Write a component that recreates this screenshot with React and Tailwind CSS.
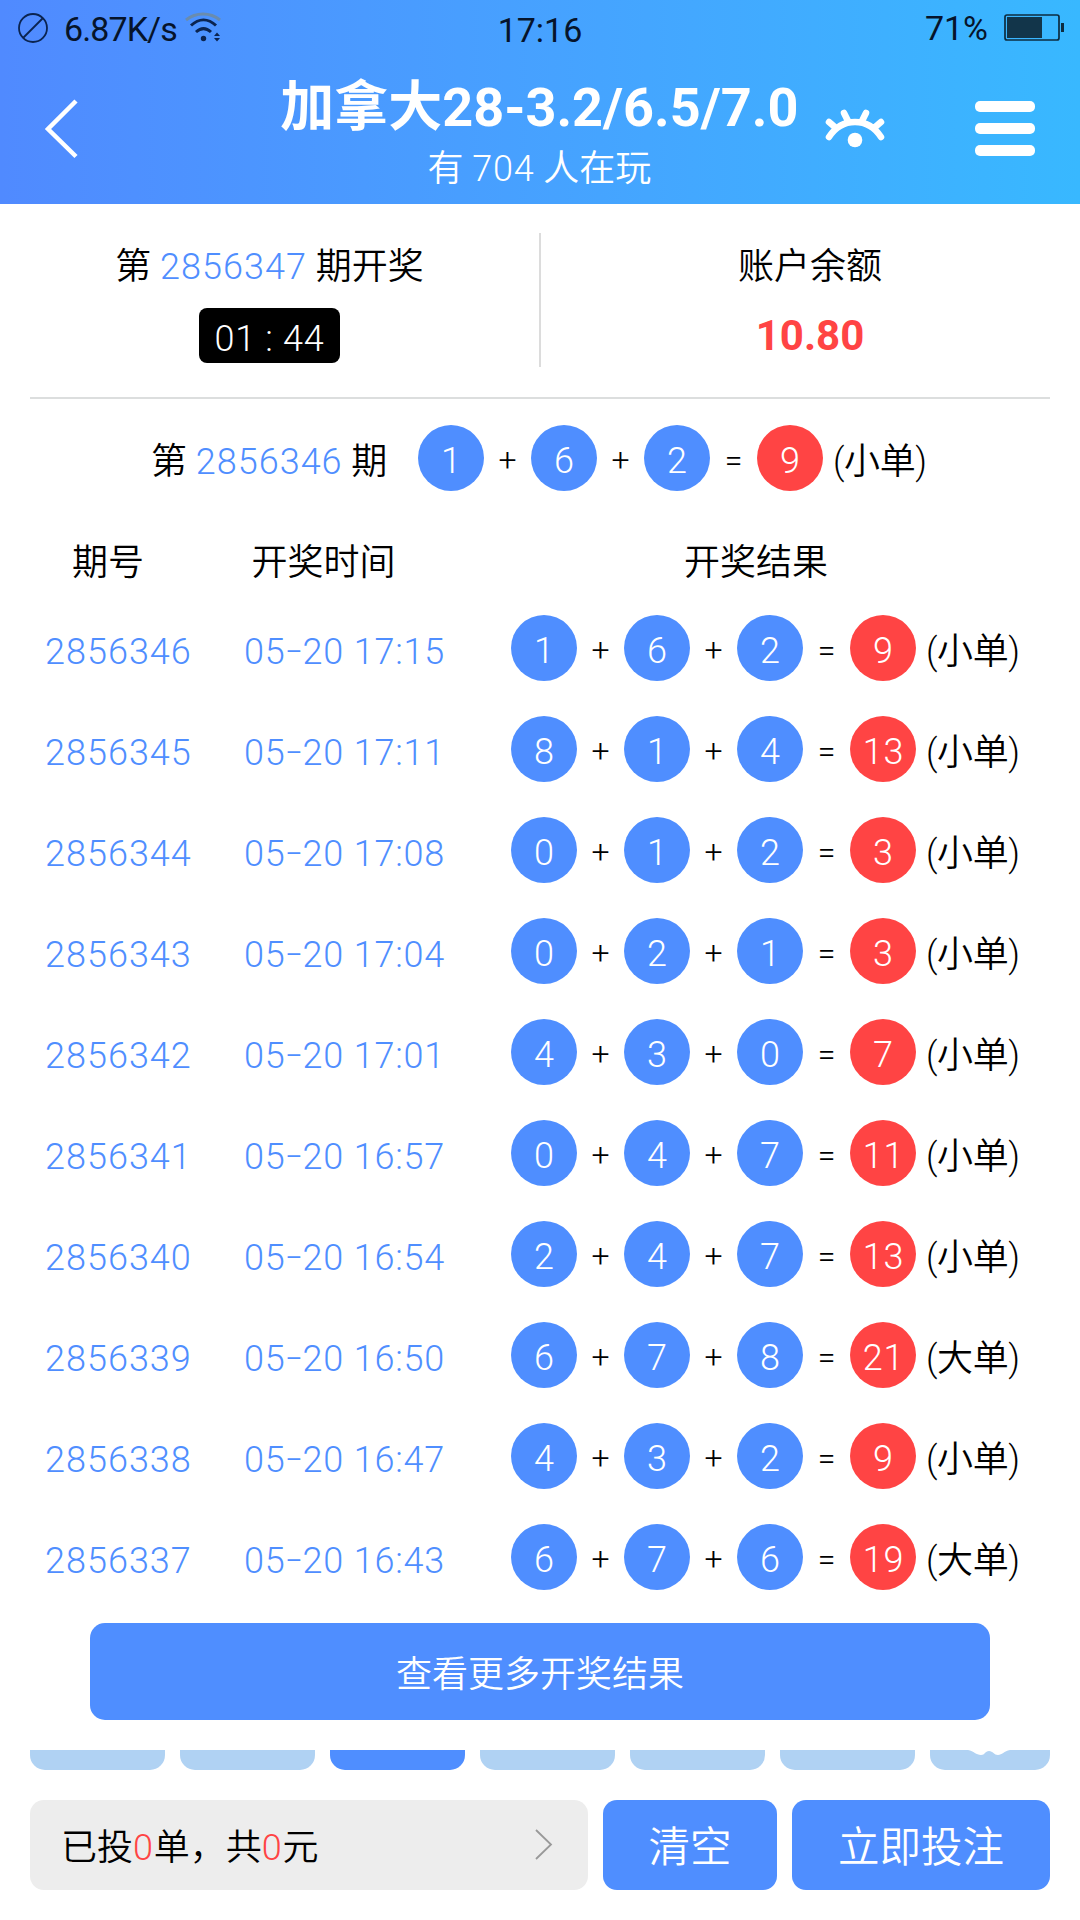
import React from "react";

const DRAWS = [
  { id: "2856346", time: "05-20 17:15", nums: [1, 6, 2], sum: 9, type: "小单" },
  { id: "2856345", time: "05-20 17:11", nums: [8, 1, 4], sum: 13, type: "小单" },
  { id: "2856344", time: "05-20 17:08", nums: [0, 1, 2], sum: 3, type: "小单" },
  { id: "2856343", time: "05-20 17:04", nums: [0, 2, 1], sum: 3, type: "小单" },
  { id: "2856342", time: "05-20 17:01", nums: [4, 3, 0], sum: 7, type: "小单" },
  { id: "2856341", time: "05-20 16:57", nums: [0, 4, 7], sum: 11, type: "小单" },
  { id: "2856340", time: "05-20 16:54", nums: [2, 4, 7], sum: 13, type: "小单" },
  { id: "2856339", time: "05-20 16:50", nums: [6, 7, 8], sum: 21, type: "大单" },
  { id: "2856338", time: "05-20 16:47", nums: [4, 3, 2], sum: 9, type: "小单" },
  { id: "2856337", time: "05-20 16:43", nums: [6, 7, 6], sum: 19, type: "大单" },
];

const TABS = [0, 1, 2, 3, 4, 5];

function StatusBar() {
  return (
    <div className="grid grid-cols-3 items-center h-[56px] text-[34px] leading-none font-normal text-[#06142b]">
      <div className="flex items-center pl-[17px]">
        <svg width="32" height="32" viewBox="0 0 32 32" fill="none" stroke="#0b2450" strokeWidth="1.8">
          <circle cx="16" cy="16" r="14" />
          <path d="M6 26L26 6" />
        </svg>
        <span className="ml-[15px] pt-[2px] w-[113px] tracking-[-0.9px]">6.87K/s</span>
        <svg className="ml-[8px] shrink-0" width="38" height="32" viewBox="0 0 38 32" fill="none" strokeWidth="3">
          <path d="M1 8C11 0 25 0 35 8" stroke="#6a8cae" />
          <path d="M6 13.500C14 6 23 6 31 13.500" stroke="#0b2450" />
          <path d="M11 20C16 15.500 21 15.500 26 20" stroke="#0b2450" />
          <circle cx="18.500" cy="26.500" r="2.700" fill="#0b2450" />
          <path d="M29 24l3-3.500 3 3.500zM29 26l3 3.500 3-3.500z" fill="#0b2450" />
        </svg>
      </div>
      <span className="text-center pt-[3px]">17:16</span>
      <div className="flex items-center justify-end pr-[16px]">
        <span>71%</span>
        <svg className="ml-[16px]" width="60" height="28" viewBox="0 0 60 28">
          <rect x="1" y="1" width="54" height="25" rx="2" fill="none" stroke="#0d2c40" strokeWidth="1.700" />
          <rect x="3" y="3" width="35" height="21" fill="#12354a" />
          <rect x="57" y="9" width="3" height="9" fill="#0d2c40" />
        </svg>
      </div>
    </div>
  );
}

function Header() {
  return (
    <header className="h-[204px] bg-linear-to-r from-[#508aff] to-[#38b8ff]">
      <StatusBar />
      <div className="flex justify-between h-[148px] text-white">
        <svg className="ml-[44px] mt-[43px]" width="36" height="60" viewBox="0 0 36 60" fill="none" stroke="white" strokeWidth="4.500">
          <path d="M32 2L4 30L32 57.500" />
        </svg>
        <div className="flex flex-col items-center ml-[199px] mt-[16px] w-[520px]">
          <h1 className="text-[54px] leading-[72px] font-bold whitespace-nowrap">加拿大28-3.2/6.5/7.0</h1>
          <p className="mt-[1px] text-[36px] leading-[48px] whitespace-nowrap">
            有 <span className="tracking-[0.8px]">704</span> 人在玩
          </p>
        </div>
        <svg className="ml-[22px] mr-[1px] mt-[48px]" width="64" height="46" viewBox="0 0 64 46" fill="none" stroke="white" strokeWidth="6.500" strokeLinecap="round">
          <path d="M7 33C20 13 46 13 59 33M14 24L7 18M26 17L22 9M40 17L44 9M52 24L59 18" />
          <circle cx="33" cy="36" r="7.300" fill="white" stroke="none" />
        </svg>
        <div className="flex flex-col gap-[11px] mt-[45px] mr-[45px] ml-[88px]">
          <i className="block w-[60px] h-[11px] rounded-[5px] bg-white" />
          <i className="block w-[60px] h-[11px] rounded-[5px] bg-white" />
          <i className="block w-[60px] h-[11px] rounded-[5px] bg-white" />
        </div>
      </div>
    </header>
  );
}

function Ball({ value, red }) {
  return (
    <span
      className={`flex items-center justify-center w-[66px] h-[66px] pt-[5px] pl-[1px] rounded-full text-white tracking-[0.8px] ${
        red ? "bg-[#ff4444]" : "bg-[#4f8eff]"
      }`}
    >
      {value}
    </span>
  );
}

function Sign({ children }) {
  return <span className="w-[47px] pt-[3px] text-center text-[32px]">{children}</span>;
}

function Result({ draw }) {
  return (
    <div className="flex items-center h-[66px] leading-none">
      <Ball value={draw.nums[0]} />
      <Sign>+</Sign>
      <Ball value={draw.nums[1]} />
      <Sign>+</Sign>
      <Ball value={draw.nums[2]} />
      <Sign>=</Sign>
      <Ball value={draw.sum} red />
      <span className="ml-[10px] pt-[8px] tracking-[-0.4px] whitespace-nowrap">({draw.type})</span>
    </div>
  );
}

function DrawTime({ time }) {
  const [month, rest] = time.split("-");
  return (
    <span className="flex w-[267px] pt-[7px] tracking-[0.8px] whitespace-pre">
      {month}
      <span className="w-[17px] text-center scale-x-150 -translate-y-px">-</span>
      {rest}
    </span>
  );
}

function App() {
  return (
    <div className="w-[1080px] h-[1920px] overflow-hidden bg-white text-black text-[36px] font-[350] font-[Roboto,'Noto_Sans_CJK_SC',sans-serif]">
      <Header />

      {/* Countdown and balance */}
      <section className="flex mx-[30px] h-[195px] pt-[29px] border-b-2 border-[#dcdede]">
        <div className="shrink-0 flex flex-col items-center w-[511px] h-[134px] pl-[30px] pr-[60px] border-r-2 border-[#dcdcdc]">
          <p className="mt-[10px] leading-[48px] whitespace-nowrap">
            第 <span className="text-[#4f8eff] tracking-[1px]">2856347</span> 期开奖
          </p>
          <div className="flex justify-center items-center mt-[17px] w-[141px] h-[55px] pt-[6px] rounded-[8px] bg-black text-white leading-none tracking-[0.8px]">
            <span>01</span>
            <span className="w-[27px] text-center">:</span>
            <span>44</span>
          </div>
        </div>
        <div className="flex flex-col items-center grow pl-[29px]">
          <p className="mt-[10px] leading-[48px]">账户余额</p>
          <p className="mt-[21px] text-[42px] leading-[48px] font-bold text-[#ff4444]">10.80</p>
        </div>
      </section>

      {/* Latest draw */}
      <section className="flex mt-[26px] pl-[151px] h-[66px] items-center">
        <p className="w-[267px] pt-[8px] leading-none whitespace-nowrap">
          第 <span className="text-[#4f8eff] tracking-[1px]">2856346</span> 期
        </p>
        <Result draw={DRAWS[0]} />
      </section>

      {/* History */}
      <section className="mt-[48px]">
        <div className="flex h-[48px] leading-[48px] text-center">
          <span className="w-[216px]">期号</span>
          <span className="w-[215px]">开奖时间</span>
          <span className="ml-[25px] w-[600px]">开奖结果</span>
        </div>
        <div className="flex flex-col gap-[35px] mt-[28px]">
          {DRAWS.map((draw) => (
            <div key={draw.id} className="flex items-center h-[66px] pl-[45px] leading-none">
              <span className="w-[199px] pt-[7px] text-[#4f8eff] tracking-[1px]">{draw.id}</span>
              <span className="text-[#4f8eff]">
                <DrawTime time={draw.time} />
              </span>
              <Result draw={draw} />
            </div>
          ))}
        </div>
      </section>

      <button className="block mx-auto mt-[33px] w-[900px] h-[97px] pt-[7px] rounded-[15px] bg-[#4f8eff] text-white">
        查看更多开奖结果
      </button>

      {/* Tab strip, cut off by the panel above */}
      <div className="flex gap-[15px] mx-[30px] mt-[30px] h-[20px]">
        {TABS.map((tab) => (
          <div
            key={tab}
            className={`w-[135px] rounded-b-[15px] ${tab === 2 ? "bg-[#4f8eff]" : "bg-[#b0d2f3]"}`}
          />
        ))}
        <div className="flex w-[120px] rounded-b-[15px] bg-[#b0d2f3]">
          <svg className="ml-[38px]" width="42" height="6" viewBox="0 0 42 6" fill="white">
            <path d="M0 0C6 1 8 5 13 5C17 5 17 1 21 1S26 5 30 5C34 5 36 1 42 0z" />
          </svg>
        </div>
      </div>

      {/* Bet bar */}
      <footer className="flex gap-[15px] mx-[30px] mt-[30px] h-[90px]">
        <div className="flex items-center justify-between w-[558px] pl-[31px] pr-[35px] rounded-[14px] bg-[#ededed]">
          <p className="pt-[6px]">
            已投<span className="text-[#ff4444] tracking-[0.8px]">0</span>单，共
            <span className="text-[#ff4444] tracking-[0.8px]">0</span>元
          </p>
          <svg width="18" height="32" viewBox="0 0 18 32" fill="none" stroke="#999" strokeWidth="1.800">
            <path d="M1 1L16 15.500L1 30" />
          </svg>
        </div>
        <button className="w-[174px] pt-[7px] rounded-[14px] bg-[#4f8eff] text-white text-[41.500px]">清空</button>
        <button className="w-[258px] pt-[7px] rounded-[14px] bg-[#4f8eff] text-white text-[41.500px]">立即投注</button>
      </footer>
    </div>
  );
}
export default App;
